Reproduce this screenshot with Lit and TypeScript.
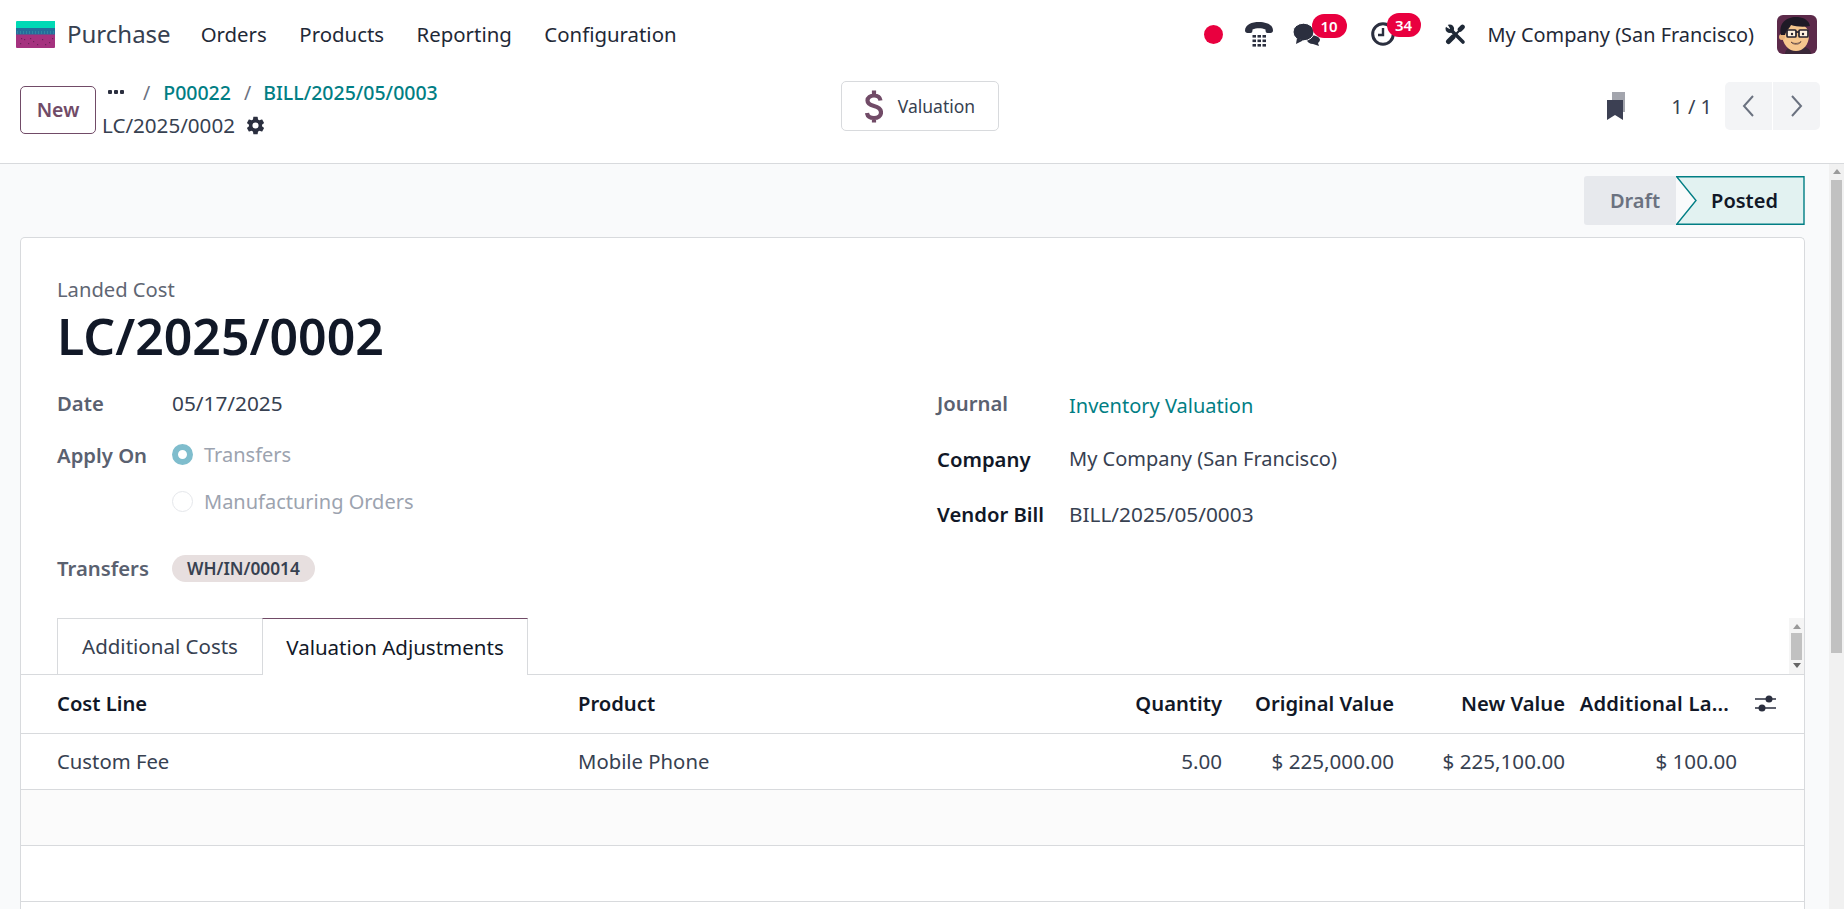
import { LitElement, html, css, svg } from "lit";
import { customElement } from "lit/decorators.js";

@customElement("app-root")
export class AppRoot extends LitElement {
  static styles = css`
    :host { display: block; height: 909px; overflow: hidden; background: #f9fafb; font-family: "Noto Sans", "Open Sans", sans-serif; font-size: 20px; color: #374151; }
    * { box-sizing: border-box; }
    svg { display: block; }
    .nav { height: 68px; background: #fff; display: flex; align-items: center; padding-left: 16px; color: #1f2937; }
    .brand { font-size: 24px; margin: 0 30px 0 12px; padding-bottom: 2px; color: #374151; }
    .menu { display: flex; gap: 32.5px; font-size: 20.4px; }
    .sys { margin-left: auto; display: flex; align-items: center; }
    .dot { width: 19px; height: 19px; border-radius: 50%; background: #e9003f; margin-right: 22px; }
    .ic { position: relative; }
    .badge { position: absolute; background: #e9003f; color: #fff; font-size: 15px; font-weight: 600; border-radius: 12px; height: 24px; width: 35px; text-align: center; line-height: 24px; }
    .company { margin: 0 23px 0 0; font-size: 19.9px; }
    .avatar { margin-right: 27px; }
    .cp { height: 96px; background: #fff; border-bottom: 1px solid #d8dadd; display: flex; padding-left: 20px; }
    .new { width: 76px; height: 48px; margin-top: 18px; padding-bottom: 2px; border: 1px solid #714b67; border-radius: 5px; color: #714b67; font-weight: 600; font-size: 19.5px; display: flex; align-items: center; justify-content: center; flex: none; }
    .crumbs { margin-left: 6px; padding-top: 9px; width: 420px; flex: none; }
    .crumb-row { display: flex; align-items: center; height: 30px; font-size: 19.5px; }
    .crumb-row a { color: #017e84; font-weight: 500; }
    .sep { color: #6b7280; margin: 0 13px; }
    .more { margin-left: 6px; margin-right: 6px; }
    .crumb-2 { display: flex; align-items: center; gap: 10px; height: 35px; padding-top: 1px; color: #374151; font-size: 20.6px; }
    .val { width: 158px; height: 50px; margin: 13px 0 0 319px; border: 1px solid #d8dadd; border-radius: 5px; display: flex; align-items: center; justify-content: center; gap: 15px; font-size: 17.500px; color: #374151; flex: none; }
    .cp-right { margin-left: auto; display: flex; align-items: center; margin-right: 24px; height: 76px; }
    .pager { margin: 0 13px 0 46px; }
    .pg-btns { display: flex; gap: 1px; border-radius: 5px; overflow: hidden; height: 48px; }
    .pg-btns div { width: 47px; background: #f3f4f6; display: flex; align-items: center; justify-content: center; }
    .body { position: relative; padding: 12px 39px 0 20px; height: 745px; }
    .status { display: flex; justify-content: flex-end; height: 49px; font-weight: 600; font-size: 20px; }
    .st-draft { width: 92px; background: #e7e9ed; color: #6b7280; display: flex; align-items: center; justify-content: center; padding-left: 10px; border-radius: 3px 0 0 3px; }
    .st-posted { width: 129px; position: relative; display: flex; align-items: center; justify-content: center; color: #111827; padding-left: 8px; }
    .st-posted svg { position: absolute; inset: 0; }
    .st-posted span { position: relative; }
    .card { margin-top: 12px; background: #fff; border: 1px solid #d8dadd; border-bottom: 0; border-radius: 5px 5px 0 0; height: 700px; position: relative; }
    .head { padding: 38px 36px 0; }
    .sub { color: #5f6673; font-size: 20.200px; line-height: 26px; }
    h1 { margin: 2px 0 0; font-size: 50px; font-weight: 600; color: #111827; line-height: 65px; }
    .form { display: grid; grid-template-columns: 880px 1fr; padding: 0 36px; margin-top: 6px; }
    .f { display: grid; grid-template-columns: 115px 1fr; }
    .fr { display: grid; grid-template-columns: 132px 1fr; }
    .l { font-weight: 600; color: #5a6170; font-size: 20.3px; }
    .lb { font-weight: 600; color: #111827; font-size: 20.3px; }
    .fr > div, .f > div { display: flex; align-items: center; }
    .n { font-size: 20.8px; }
    .h-date { height: 56px; }
    .h-apply { height: 47px; }
    .opt { gap: 11px; color: #9ca3af; height: 47px; }
    .rd { width: 21px; height: 21px; border-radius: 50%; border: 1px solid #e5e7eb; background: #fff; }
    .rd.on { border: 6px solid #7fbdcd; }
    .tag { background: #e7dfdf; color: #374151; border-radius: 14px; height: 27px; line-height: 27px; padding: 0 15px; font-size: 17.300px; font-weight: 600; }
    .h-t { height: 68px; padding-top: 18px; }
    .h-r { height: 55px; }
    .right { padding-top: 5px; }
    .h-j { height: 51px; }
    .up { padding-bottom: 6px; }
    .link { color: #017e84; }
    .tabs { display: flex; padding-left: 36px; margin-top: 25px; height: 57px; padding-bottom: 0; border-bottom: 1px solid #d8dadd; position: relative; font-size: 20.500px; }
    .tab { display: flex; align-items: center; justify-content: center; border: 1px solid #d8dadd; border-bottom: 0; padding-bottom: 1px; }
    .t1 { width: 205px; color: #374151; border-right: 0; }
    .t2 { width: 266px; color: #111827; background: #fff; border-top: 1px solid #714b67; height: 57px; }
    .isb { position: absolute; right: 0; top: 0; width: 15px; height: 56px; background: #f5f5f5; }
    .isb i { position: absolute; left: 2px; top: 15px; width: 11px; height: 27px; background: #c1c1c1; }
    .row { display: grid; grid-template-columns: 521px 425px 219px 172px 171px 172px 1fr; height: 56px; align-items: center; padding-left: 36px; border-bottom: 1px solid #d8dadd; font-size: 20.3px; padding-bottom: 1px; }
    .th { height: 59px; font-weight: 600; color: #111827; font-size: 20.2px; padding-bottom: 2px; }
    .num { text-align: right; }
    .row .num.n { font-size: 20.6px; }
    .alt { background: #fbfbfb; }
    .ell { padding-right: 8px; letter-spacing: .2px; }
    .sliders { margin-left: 18px; }
    .sb { position: absolute; right: 0; top: 0; bottom: 0; width: 15px; background: #f1f1f1; }
    .sb i { position: absolute; left: 2px; top: 16px; width: 11px; height: 473px; background: #c1c1c1; }
    .arrow { position: absolute; left: 4px; width: 0; height: 0; border-left: 4px solid transparent; border-right: 4px solid transparent; }
    .au { border-bottom: 5px solid #9a9a9a; top: 6px; }
    .ad { border-top: 5px solid #666; bottom: 6px; }
  `;

  private logo() {
    const dots = [];
    for (let x = 1; x < 39; x += 3) dots.push(svg`<rect x="${x}" y="10" width="1" height="3" fill="#2f86a3"/>`);
    for (const [x, y] of [[4,22],[8,18],[12,22],[17,20],[21,23],[26,18],[29,23],[33,21],[36,17],[14,17],[5,17]]) dots.push(svg`<rect x="${x}" y="${y}" width="1.200" height="1.200" fill="#6d2259"/>`);
    return svg`<svg width="39" height="27" viewBox="0 0 39 27">
      <path d="M1 0h38v7H0V1a1 1 0 0 1 1-1z" fill="#00d9b5"/>
      <rect y="7" width="39" height="7" fill="#256d9a"/>
      <path d="M0 13.500h39v12.500a1 1 0 0 1-1 1H1a1 1 0 0 1-1-1z" fill="#a5327f"/>
      ${dots}
    </svg>`;
  }

  private avatar() {
    return svg`<svg width="40" height="39" viewBox="0 0 40 39">
      <rect width="40" height="39" rx="6" fill="#5c2a4a"/>
      <path d="M8 39c0-5 5-8 13-8s13 3 13 8z" fill="#3a2838"/>
      <path d="M5 18c0 12 7 18 14 18s13-6 13-16c0-7-6-12-14-12S5 12 5 18z" fill="#f6c68e"/>
      <circle cx="5" cy="22" r="3" fill="#e8b27a"/>
      <path d="M4 20C1 7 11 1 21 2c7 .7 11 4 12 9-7 1.500-14 .5-19-1-1 3-4 4-6 10z" fill="#1f1a26"/>
      <rect x="10" y="15" width="9" height="7" rx="1" fill="#fff2df" stroke="#26222e" stroke-width="1.700"/>
      <rect x="22" y="15" width="9" height="7" rx="1" fill="#fff2df" stroke="#26222e" stroke-width="1.700"/>
      <path d="M19 17h3" stroke="#26222e" stroke-width="1.700"/>
      <circle cx="15" cy="19" r="1.200" fill="#26222e"/><circle cx="26" cy="19" r="1.200" fill="#26222e"/>
      <path d="M14 27c3 2 7 2 10-.5-1 3.500-8 3.500-10 .5z" fill="#fff" stroke="#5a3a30" stroke-width=".8"/>
    </svg>`;
  }

  render() {
    const dark = "#2b2f3f";
    const keys = [];
    for (const y of [14, 18.5, 23]) for (const x of [7.5, 12.5, 17.5]) keys.push(svg`<rect x="${x}" y="${y}" width="3.500" height="2.600" fill="${dark}"/>`);
    return html`
      <div class="nav">
        ${this.logo()}
        <span class="brand">Purchase</span>
        <div class="menu"><span>Orders</span><span>Products</span><span>Reporting</span><span>Configuration</span></div>
        <div class="sys">
          <div class="dot"></div>
          <svg width="28" height="26" viewBox="0 0 28 26" style="margin-right:20px"><path d="M0 9.500C0 3.500 7 1 14 1s14 2.500 14 8.500c0 1.500-1 2.500-2.500 2.500h-3c-1.500 0-2-1-2-3.500C18.500 7.700 16.500 7.300 14 7.300s-4.500.4-6.500 1.200c0 2.500-.5 3.500-2 3.500h-3C1 12 0 11 0 9.500z" fill="${dark}"/>${keys}</svg>
          <div class="ic" style="width:27px;height:23px;margin-right:51px">
            <svg width="27" height="23" viewBox="0 0 27 23"><path d="M17 12c5 0 9 1.500 10 4.500 0 1.500-1 2.500-2 3.500l1 3-6-2c-3 0-6-2-7-5z" fill="${dark}"/><ellipse cx="10.500" cy="9" rx="10.500" ry="8.800" fill="${dark}" stroke="#fff" stroke-width="1"/><path d="M4 15l-1 6 7-3.500z" fill="${dark}"/></svg>
            <span class="badge" style="left:19px;top:-9px">10</span>
          </div>
          <div class="ic" style="width:23px;height:24px;margin-right:51px">
            <svg width="24" height="24" viewBox="0 0 24 24"><circle cx="12" cy="12" r="10.300" fill="none" stroke="${dark}" stroke-width="3"/><path d="M12 6v7H7" fill="none" stroke="${dark}" stroke-width="2.400"/></svg>
            <span class="badge" style="left:16px;top:-9px;width:34px">34</span>
          </div>
          <svg width="21" height="21" viewBox="0 0 21 21" style="margin-right:22px">
            <g fill="none" stroke="#1f2937" stroke-linecap="round">
              <path d="M5 5l13 13" stroke-width="3.600"/>
              <path d="M17.500 3l-2.500 2.500" stroke-width="4.600"/>
              <path d="M14 7l-5 5" stroke-width="2.200"/>
              <path d="M8 13l-4.500 4.500" stroke-width="5"/>
            </g>
            <circle cx="4.800" cy="4.800" r="4.300" fill="#1f2937"/>
            <path d="M4.500 4.500L1.500-.5-.5 1.500z" fill="#fff" stroke="#fff"/>
          </svg>
          <span class="company">My Company (San Francisco)</span>
          <div class="avatar">${this.avatar()}</div>
        </div>
      </div>
      <div class="cp">
        <div class="new">New</div>
        <div class="crumbs">
          <div class="crumb-row"><span class="more"><svg width="16" height="6" viewBox="0 0 16 6"><g fill="${dark}"><rect x="0" y="1" width="4" height="4" rx="1"/><rect x="6" y="1" width="4" height="4" rx="1"/><rect x="12" y="1" width="4" height="4" rx="1"/></g></svg></span><span class="sep">/</span><a>P00022</a><span class="sep" style="margin-right:12px">/</span><a>BILL/2025/05/0003</a></div>
          <div class="crumb-2">LC/2025/0002
            <svg width="21" height="21" viewBox="0 0 24 24"><path fill="${dark}" d="M19.430 12.980c.04-.32.070-.64.070-.98s-.03-.66-.07-.98l2.110-1.650c.19-.15.240-.42.120-.64l-2-3.460c-.12-.22-.39-.3-.61-.22l-2.490 1c-.52-.4-1.080-.73-1.690-.98l-.38-2.650A.49.49 0 0 0 14 2h-4c-.25 0-.46.18-.49.420l-.38 2.650c-.61.25-1.170.59-1.690.98l-2.490-1c-.23-.09-.49 0-.61.220l-2 3.460c-.13.220-.07.490.12.640l2.110 1.650c-.04.320-.07.650-.07.980s.03.660.07.980l-2.110 1.650c-.19.150-.24.420-.12.640l2 3.460c.12.220.39.300.61.220l2.490-1c.52.400 1.080.730 1.690.980l.38 2.650c.03.240.24.420.49.420h4c.25 0 .46-.18.49-.42l.38-2.650c.61-.25 1.170-.59 1.690-.98l2.490 1c.23.090.49 0 .61-.22l2-3.460c.12-.22.070-.49-.12-.64zM12 15.500a3.500 3.500 0 1 1 0-7 3.500 3.500 0 0 1 0 7z"/></svg>
          </div>
        </div>
        <div class="val">
          <svg width="18" height="33" viewBox="0 0 18 33"><path d="M15.500 10.500C15 7.500 12.500 5.500 9 5.500S2.500 7.500 2.500 10.500 5 15 9 16s7 3 7 6.500-3 5.500-7 5.500-6.500-2-7-5M9 .5v5M9 28v4.500" fill="none" stroke="#714b67" stroke-width="4.200"/></svg>
          <span>Valuation</span>
        </div>
        <div class="cp-right">
          <svg width="18" height="28" viewBox="0 0 18 28"><path d="M5 0h13v20h-2V8H5z" fill="#a3a5ad"/><path d="M0 8h16v20l-8-5-8 5z" fill="#3c4053"/></svg>
          <span class="pager">1 / 1</span>
          <div class="pg-btns">
            <div><svg width="13" height="22" viewBox="0 0 13 22"><path d="M11 1L2 11l9 10" fill="none" stroke="#6b7280" stroke-width="2"/></svg></div>
            <div><svg width="13" height="22" viewBox="0 0 13 22"><path d="M2 1l9 10-9 10" fill="none" stroke="#6b7280" stroke-width="2"/></svg></div>
          </div>
        </div>
      </div>
      <div class="body">
        <div class="status">
          <div class="st-draft">Draft</div>
          <div class="st-posted">
            <svg width="129" height="49" viewBox="0 0 129 49"><path d="M.7.7H128v47.600H.7L20 24.500z" fill="#e2f2f1" stroke="#017e84" stroke-width="1.400"/></svg>
            <span>Posted</span>
          </div>
        </div>
        <div class="card">
          <div class="head">
            <div class="sub">Landed Cost</div>
            <h1>LC/2025/0002</h1>
          </div>
          <div class="form">
            <div>
              <div class="f h-date"><div class="l">Date</div><div class="n">05/17/2025</div></div>
              <div class="f h-apply"><div class="l">Apply On</div><div class="opt"><span class="rd on"></span>Transfers</div></div>
              <div class="f h-apply"><div></div><div class="opt"><span class="rd"></span>Manufacturing Orders</div></div>
              <div class="f h-t"><div class="l">Transfers</div><div><span class="tag">WH/IN/00014</span></div></div>
            </div>
            <div class="right">
              <div class="fr h-j"><div class="l up">Journal</div><div class="link">Inventory Valuation</div></div>
              <div class="fr h-r"><div class="lb">Company</div><div>My Company (San Francisco)</div></div>
              <div class="fr h-r"><div class="lb">Vendor Bill</div><div class="n">BILL/2025/05/0003</div></div>
            </div>
          </div>
          <div class="tabs">
            <div class="tab t1">Additional Costs</div>
            <div class="tab t2">Valuation Adjustments</div>
            <div class="isb"><span class="arrow au"></span><i></i><span class="arrow ad"></span></div>
          </div>
          <div class="row th">
            <div>Cost Line</div><div>Product</div><div class="num">Quantity</div><div class="num">Original Value</div><div class="num">New Value</div><div class="num ell">Additional La...</div>
            <div class="sliders"><svg width="21" height="18" viewBox="0 0 21 18"><path d="M0 5h21M0 14h21" stroke="${dark}" stroke-width="1.500"/><circle cx="14" cy="5" r="3.500" fill="${dark}"/><circle cx="7" cy="14" r="3.500" fill="${dark}"/></svg></div>
          </div>
          <div class="row">
            <div>Custom Fee</div><div>Mobile Phone</div><div class="num n">5.00</div><div class="num n">$ 225,000.00</div><div class="num n">$ 225,100.00</div><div class="num n">$ 100.00</div>
          </div>
          <div class="row alt"></div>
          <div class="row"></div>
        </div>
        <div class="sb"><span class="arrow au" style="top:5px"></span><i></i></div>
      </div>
    `;
  }
}
